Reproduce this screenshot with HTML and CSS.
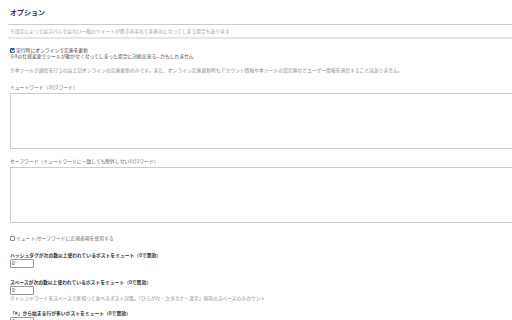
FILE: index.html
```html
<!DOCTYPE html>
<html lang="ja">
<head>
<meta charset="utf-8">
<title>オプション</title>
<link rel="stylesheet" href="styles.css">
</head>
<body>
<div class="page">
  <h1 class="title">オプション</h1>
  <p class="notice">※設定によってはスパムではない一般のツイートが巻き込まれて非表示になってしまう場合もあります</p>

  <label class="check-row first"><input type="checkbox" class="check" checked><span class="check-label">実行時にオンラインで定義を更新</span></label>
  <p class="sub-note">※Xの仕様変更でツールが動かなくなってしまった場合に対処出来る...かもしれません</p>
  <p class="note gap-note">※本ツールが通信を行うのは上記オンラインの定義更新のみです。また、オンライン定義更新時もアカウント情報や本ツールの設定値などユーザー情報を送信することはありません。</p>

  <p class="field-label gap-label">ミュートワード（1行1ワード）</p>
  <textarea class="words"></textarea>

  <p class="field-label gap-label2">セーフワード（ミュートワードに一致しても除外しない1行1ワード）</p>
  <textarea class="words"></textarea>

  <label class="check-row gap-check"><input type="checkbox" class="check"><span class="check-label muted">ミュート/セーフワードに正規表現を使用する</span></label>

  <p class="num-label gap-num">ハッシュタグが次の数以上使われているポストをミュート（0で無効）</p>
  <input type="text" class="num" value="0">

  <p class="num-label gap-num">スペースが次の数以上使われているポストをミュート（0で無効）</p>
  <input type="text" class="num" value="0">
  <p class="note">※トレンドワードをスペースで区切って並べるポスト対策。「ひらがな・カタカナ・漢字」直前のスペースのみカウント</p>

  <p class="num-label gap-num2">「#」から始まる行が多いポストをミュート（0で無効）</p>
  <input type="text" class="num" value="0">
</div>
</body>
</html>
```
FILE: styles.css
```css
html, body {
  margin: 0;
  padding: 0;
  background: #ffffff;
  overflow: hidden;
}
body {
  font-family: "Noto Sans CJK JP", "Noto Sans", sans-serif;
  color: #333;
  font-size: 4.8px;
  line-height: 6px;
}
.page {
  padding-left: 8px;
}
.title {
  margin: 0;
  padding: 8px 2px 8px;
  font-size: 7px;
  line-height: 8px;
  font-weight: 700;
  color: #333;
  border-bottom: 1px solid #cccccc;
}
.notice {
  margin: 0;
  padding: 3px 2px;
  color: #999;
  border-bottom: 2px solid #e6e6e6;
}
p {
  margin: 0;
}
.check-row {
  display: flex;
  align-items: center;
  gap: 1px;
  padding-left: 2px;
  height: 6px;
}
.check-row.first {
  margin-top: 8px;
}
.check {
  appearance: none;
  -webkit-appearance: none;
  position: relative;
  margin: 0;
  width: 5px;
  height: 5px;
  box-sizing: border-box;
  border: 1px solid #8a8a8a;
  border-radius: 1px;
  background: #fff;
}
.check:checked {
  background: #2a6fdb;
  border-color: #1d56b0;
}
.check:checked::after {
  content: "";
  position: absolute;
  left: 0.5px;
  top: -0.5px;
  width: 1.5px;
  height: 2.5px;
  border: solid #fff;
  border-width: 0 0.8px 0.8px 0;
  transform: rotate(45deg);
}
.check-label {
  color: #333;
}
.check-label.muted {
  color: #666;
}
.sub-note {
  padding-left: 2px;
  color: #444;
}
.note {
  padding-left: 2px;
  color: #888;
}
.gap-note {
  margin-top: 8px;
}
.field-label {
  padding-left: 2px;
  color: #666;
}
.gap-label {
  margin-top: 11px;
}
.gap-label2 {
  margin-top: 9px;
}
.words {
  display: block;
  margin: 3px 0 0 2px;
  width: calc(100% - 2px);
  height: 56px;
  box-sizing: border-box;
  border: 1px solid #cccccc;
  border-right: 0;
  border-radius: 0;
  padding: 2px;
  resize: none;
  background: #fff;
}
.gap-check {
  margin-top: 12px;
}
.num-label {
  padding-left: 2px;
  color: #333;
  font-weight: 600;
}
.gap-num {
  margin-top: 11px;
}
.gap-num2 {
  margin-top: 9px;
}
.num {
  display: block;
  margin: 1px 0 0 2px;
  width: 24px;
  height: 9px;
  box-sizing: border-box;
  border: 1px solid #999;
  border-radius: 1px;
  padding: 0 1px;
  font-family: "Liberation Sans", sans-serif;
  font-size: 4.8px;
  line-height: 7px;
  color: #333;
  background: #fff;
}
```
